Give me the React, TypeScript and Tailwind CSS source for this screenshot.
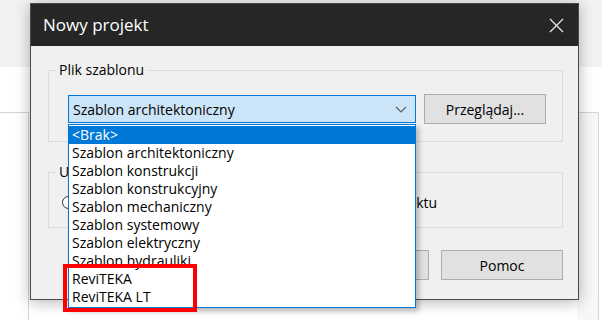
const FONT = { fontFamily: '"Segoe UI", "Open Sans", "Noto Sans", sans-serif' };

const templates = [
  '<Brak>',
  'Szablon architektoniczny',
  'Szablon konstrukcji',
  'Szablon konstrukcyjny',
  'Szablon mechaniczny',
  'Szablon systemowy',
  'Szablon elektryczny',
  'Szablon hydrauliki',
  'ReviTEKA',
  'ReviTEKA LT',
];

function Radio() {
  return (
    <span className="block w-[13px] h-[13px] rounded-full border border-[#333] bg-white shrink-0" />
  );
}

function WinButton({ label, className = '' }: { label: string; className?: string }) {
  return (
    <div
      className={`w-[122px] h-[30px] flex items-center justify-center bg-[#e1e1e1] border border-[#adadad] text-[14px] text-black ${className}`}
    >
      {label}
    </div>
  );
}

export default function App() {
  return (
    <div className="relative w-[602px] h-[320px] overflow-hidden bg-white" style={FONT}>
      {/* window behind the dialog */}
      <div className="h-[67px] bg-[#f2f2f2]" />
      <div className="flex h-[253px] pt-[45px]">
        <div className="w-[29px] border-t border-r border-[#d4d4d4]" />
        <div className="flex-1" />
        <div className="w-[22px] border-t border-r border-[#d4d4d4] bg-[#f7f7f7] mr-[3px]" />
      </div>

      {/* dialog */}
      <div className="absolute left-[30px] top-[3px] w-[549px] h-[297px] bg-[#f0f0f0] border border-[#4a4a4a] shadow-[0_2px_14px_rgba(0,0,0,0.3)] flex flex-col">
        <div className="h-[42px] bg-[#262626] flex items-center justify-between pl-[12px] pr-[14px] shrink-0">
          <span className="text-[17px] text-white">Nowy projekt</span>
          <svg width="15" height="15" viewBox="0 0 15 15" className="text-[#e6e6e6]">
            <path d="M1 1 L14 14 M14 1 L1 14" stroke="currentColor" strokeWidth="1.3" />
          </svg>
        </div>

        <div className="flex flex-col pl-[17px] pr-[15px] pt-[24px]">
          {/* Plik szablonu */}
          <div className="relative h-[72px] border border-[#dcdcdc] pl-[19px] pt-[23px]">
            <span className="absolute left-[7px] top-[-11px] px-[3px] bg-[#f0f0f0] text-[14px] text-black leading-[20px]">
              Plik szablonu
            </span>
            <div className="flex items-center gap-[8px]">
              <div className="w-[348px] h-[28px] bg-[#cce4f7] border border-[#0078d7] flex items-center justify-between pl-[4px] pr-[8px] text-[14px] text-black">
                <span>Szablon architektoniczny</span>
                <svg width="12" height="7" viewBox="0 0 12 7">
                  <path d="M1 1 L6 6 L11 1" fill="none" stroke="#5a5a5a" strokeWidth="1.1" />
                </svg>
              </div>
              <WinButton label="Przeglądaj..." />
            </div>
          </div>

          {/* Utwórz nowy */}
          <div className="relative mt-[30px] h-[56px] border border-[#dcdcdc] flex items-center pl-[13px] pt-[4px] text-[14px] text-black">
            <span className="absolute left-[7px] top-[-11px] px-[3px] bg-[#f0f0f0] leading-[20px]">
              Utwórz nowy
            </span>
            <Radio />
            <span className="ml-[6px]">Projekt</span>
            <span className="ml-[181px]">
              <Radio />
            </span>
            <span className="ml-[6px]">Szablon projektu</span>
          </div>

          {/* buttons */}
          <div className="flex justify-end gap-[12px] mt-[22px]">
            <WinButton label="OK" />
            <WinButton label="Anuluj" />
            <WinButton label="Pomoc" />
          </div>
        </div>
      </div>

      {/* open combo list */}
      <div className="absolute left-[68px] top-[124px] w-[348px] bg-white border border-[#0078d7] shadow-[3px_3px_5px_rgba(0,0,0,0.25)] flex flex-col py-[1px]">
        {templates.map((t, i) => (
          <div
            key={t}
            className={`h-[18px] leading-[18px] pl-[3px] text-[14px] ${
              i === 0 ? 'bg-[#0078d7] text-white' : 'text-black'
            }`}
          >
            {t}
          </div>
        ))}
      </div>

      {/* highlight */}
      <div className="absolute left-[63px] top-[264px] w-[134px] h-[48px] border-[4px] border-[#ff0000]" />
    </div>
  );
}
